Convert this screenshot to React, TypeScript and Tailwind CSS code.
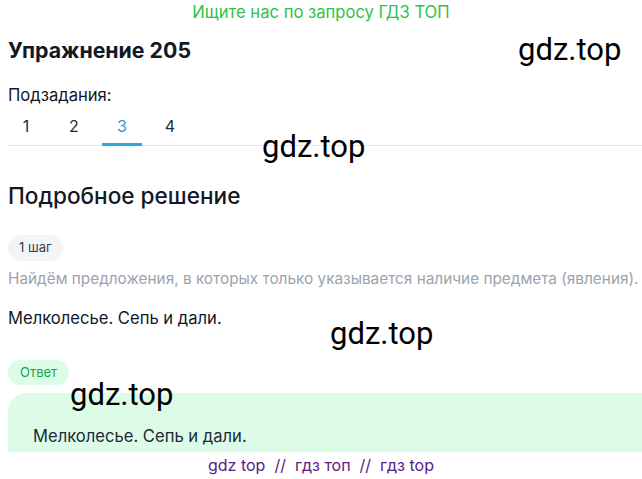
import React from "react";

const Mark = ({ className }: { className: string }) => (
  <span
    className={
      "absolute text-[31px] leading-none text-black font-['Roboto',sans-serif] pointer-events-none " +
      className
    }
  >
    gdz.top
  </span>
);

const tabs = ["1", "2", "3", "4"];

export default function App() {
  return (
    <div className="relative w-[642px] h-[479px] overflow-hidden bg-white font-['Inter',sans-serif] text-[#111827]">
      {/* верхняя строка */}
      <p className="h-[24px] text-center text-[16.6px] leading-[24px] text-[#2fc24a]">
        Ищите нас по запросу ГДЗ ТОП
      </p>

      <div className="pl-2">
        <h1 className="mt-[12px] text-[21.3px] leading-[28px] font-bold">Упражнение 205</h1>

        <p className="mt-[20px] text-[16.6px] leading-[22px]">Подзадания:</p>

        {/* вкладки */}
        <div className="mt-[4px] border-b border-[#e5e7eb]">
          <div className="flex gap-2 -ml-[2px] -mb-px">
            {tabs.map((n) => (
              <div
                key={n}
                className={
                  "w-[40px] h-[36px] flex justify-center pt-[5px] text-[16px] leading-[22px] border-b-[3px] " +
                  (n === "3" ? "text-[#3596cf] border-[#29a9e0]" : "text-[#1f2937] border-transparent")
                }
              >
                {n}
              </div>
            ))}
          </div>
        </div>

        <h2 className="mt-[35px] text-[22.6px] leading-[30px] font-medium">Подробное решение</h2>

        <span className="mt-[24px] flex w-fit items-center h-[26px] px-[11px] rounded-full bg-[#f3f4f6] text-[13px] text-[#374151]">
          1 шаг
        </span>

        <p className="mt-[7px] text-[15.35px] leading-[22px] text-[#9ca3af] whitespace-nowrap">
          Найдём предложения, в которых только указывается наличие предмета (явления).
        </p>

        <p className="mt-[17px] text-[16.6px] leading-[22px]">Мелколесье. Сепь и дали.</p>

        <span className="mt-[31px] flex w-fit items-center h-[25px] px-[12px] rounded-full bg-[#dcfce7] text-[13px] text-[#16a34a]">
          Ответ
        </span>

        <div className="mt-[8px] h-[59px] rounded-tl-[18px] bg-[#dcfce7] pl-[25px] pt-[32px] text-[16.6px] leading-[22px] text-[#1f2937]">
          Мелколесье. Сепь и дали.
        </div>
      </div>

      <p className="mt-[2px] text-center text-[16px] leading-[22px] text-[#5b1a86]">
        gdz top&nbsp; //&nbsp; гдз топ&nbsp; //&nbsp; гдз top
      </p>

      <Mark className="left-[518px] top-[34px]" />
      <Mark className="left-[262px] top-[131px]" />
      <Mark className="left-[330px] top-[318px]" />
      <Mark className="left-[70px] top-[379px]" />
    </div>
  );
}
